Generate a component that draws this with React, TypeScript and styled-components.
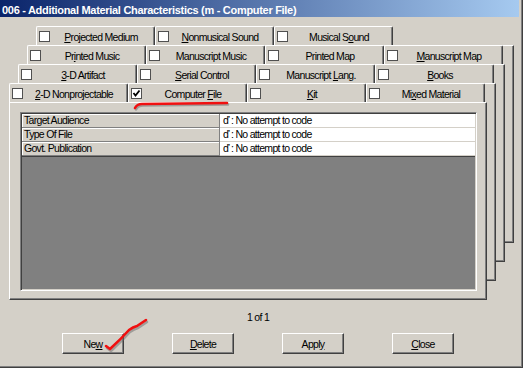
import React from "react";
import styled, { createGlobalStyle } from "styled-components";

type TabDef = { label: string; at?: number; checked?: boolean; active?: boolean };

const ROWS: TabDef[][] = [
  [
    { label: "Projected Medium", at: 0 },
    { label: "Nonmusical Sound", at: 0 },
    { label: "Musical Sound", at: 9 },
  ],
  [
    { label: "Printed Music", at: 2 },
    { label: "Manuscript Music" },
    { label: "Printed Map" },
    { label: "Manuscript Map", at: 0 },
  ],
  [
    { label: "3-D Artifact", at: 0 },
    { label: "Serial Control", at: 0 },
    { label: "Manuscript Lang.", at: 11 },
    { label: "Books", at: 0 },
  ],
  [
    { label: "2-D Nonprojectable", at: 0 },
    { label: "Computer File", at: 9, checked: true, active: true },
    { label: "Kit", at: 0 },
    { label: "Mixed Material", at: 2 },
  ],
];

const FIELDS = ["Target Audience", "Type Of File", "Govt. Publication"];

const BUTTONS: { label: string; at: number }[] = [
  { label: "New", at: 2 },
  { label: "Delete", at: 0 },
  { label: "Apply", at: 4 },
  { label: "Close", at: 0 },
];

const Accel = ({ text, at }: { text: string; at?: number }) =>
  at === undefined ? (
    <>{text}</>
  ) : (
    <>
      {text.slice(0, at)}
      <Key>{text[at]}</Key>
      {text.slice(at + 1)}
    </>
  );

const CheckBox = ({ checked }: { checked?: boolean }) => (
  <Box>
    {checked && (
      <svg width="9" height="9" viewBox="0 0 9 9">
        <path d="M1.5 4 L3.5 6.5 L7.5 1.5" fill="none" stroke="#000" strokeWidth="1.8" />
      </svg>
    )}
  </Box>
);

const App = (): JSX.Element => {
  return (
    <Window>
      <GlobalStyle />
      <TitleBar>006 - Additional Material Characteristics (m - Computer File)</TitleBar>
      <Notebook>
        {ROWS.map((row, depth) => (
          <Layer key={depth} $depth={depth}>
            <TabRow>
              {row.map((tab) => (
                <Tab key={tab.label}>
                  <CheckBox checked={tab.checked} />
                  <TabLabel>
                    <Accel text={tab.label} at={tab.at} />
                  </TabLabel>
                </Tab>
              ))}
            </TabRow>
            <Page>
              {depth === ROWS.length - 1 && (
                <GridArea>
                  <Rows>
                    {FIELDS.map((f) => (
                      <Row key={f}>
                        <LabelCell>{f}</LabelCell>
                        <ValueCell>ď : No attempt to code</ValueCell>
                      </Row>
                    ))}
                  </Rows>
                </GridArea>
              )}
            </Page>
          </Layer>
        ))}
      </Notebook>
      <Footer>
        <Status>1 of 1</Status>
        <ButtonRow>
          {BUTTONS.map((b) => (
            <Button key={b.label}>
              <Accel text={b.label} at={b.at} />
            </Button>
          ))}
        </ButtonRow>
      </Footer>
      <Marks width="523" height="368" viewBox="0 0 523 368">
        <g fill="none" strokeLinecap="round" strokeLinejoin="round">
          <path d="M136 109.5 Q138 105.5 143 105.5 L228 104.5" stroke="#6a6a6a" strokeOpacity="0.5" strokeWidth="2.5" />
          <path d="M135 108 Q137 104 142 104 L227 103" stroke="#f01010" strokeWidth="2.6" />
          <path d="M107 348 L111 351 Q122 341 130 332 Q134 329 138 328 L147 322" stroke="#6a6a6a" strokeOpacity="0.5" strokeWidth="2.5" />
          <path d="M106 346 L110 349 Q121 339 129 330 Q133 327 137 326 L146 320" stroke="#f01010" strokeWidth="2.6" />
        </g>
      </Marks>
    </Window>
  );
};

const GlobalStyle = createGlobalStyle`
  html, body {
    margin: 0;
    padding: 0;
    background: #d4d0c8;
  }
  body {
    font-family: "Liberation Sans", Arial, sans-serif;
    font-size: 10.5px;
    letter-spacing: -0.7px;
    color: #000;
  }
`;

const Window = styled.div`
  position: relative;
  width: 523px;
  height: 368px;
  box-sizing: border-box;
  display: flex;
  flex-direction: column;
  background: #d4d0c8;
  border-right: 1px solid #404040;
  border-bottom: 1px solid #404040;
  box-shadow: inset -1px -1px #808080;
  overflow: hidden;
`;

const TitleBar = styled.div`
  height: 14px;
  padding: 3px 0 0 2px;
  margin-right: 3px;
  line-height: 14px;
  font-size: 11px;
  font-weight: 700;
  letter-spacing: -0.3px;
  color: #fff;
  white-space: nowrap;
  background: linear-gradient(to right, #0a246a, #a6caf0);
`;

const Notebook = styled.div`
  display: grid;
  margin-top: 9px;
`;

const Layer = styled.div<{ $depth: number }>`
  grid-area: 1 / 1;
  justify-self: start;
  align-self: start;
  display: flex;
  flex-direction: column;
  width: 478px;
  height: 217px;
  margin-left: ${(p) => 36 - 9 * p.$depth}px;
  margin-top: ${(p) => 19 * p.$depth}px;
`;

const TabRow = styled.div`
  display: flex;
  height: 19px;
`;

const Tab = styled.div`
  width: 119px;
  height: 19px;
  box-sizing: border-box;
  display: flex;
  align-items: center;
  padding: 1px 2px 0 2px;
  background: #d4d0c8;
  border-top: 1px solid #fff;
  border-left: 1px solid #fff;
  border-right: 1px solid #404040;
  border-radius: 2px 2px 0 0;
  box-shadow: inset -1px 0 #808080;
`;

const Box = styled.span`
  width: 11px;
  height: 11px;
  box-sizing: border-box;
  flex: none;
  display: flex;
  align-items: center;
  justify-content: center;
  background: #fff;
  border: 1px solid #505050;
`;

const TabLabel = styled.span`
  flex: 1;
  text-align: center;
  white-space: nowrap;
`;

const Key = styled.u`
  text-decoration: underline;
  text-underline-offset: 1px;
`;

const Page = styled.div`
  flex: 1;
  box-sizing: border-box;
  display: flex;
  padding: 9px 9px 8px 10px;
  background: #d4d0c8;
  border-top: 1px solid #fff;
  border-left: 1px solid #fff;
  border-right: 1px solid #404040;
  border-bottom: 1px solid #404040;
  box-shadow: inset -1px -1px #808080;
`;

const GridArea = styled.div`
  flex: 1;
  background: #808080;
  border-top: 1px solid #808080;
  border-left: 1px solid #808080;
  border-right: 1px solid #fff;
  border-bottom: 1px solid #fff;
  box-shadow: inset 1px 1px #404040, inset -1px -1px #d4d0c8;
  padding: 1px;
`;

const Rows = styled.div`
  display: flex;
  flex-direction: column;
  border-bottom: 1px solid #404040;
`;

const Row = styled.div`
  display: grid;
  grid-template-columns: 198px 1fr;
  height: 14px;
  line-height: 13px;
`;

const LabelCell = styled.div`
  padding-left: 2px;
  background: #d4d0c8;
  border-bottom: 1px solid #808080;
  border-right: 1px solid #808080;
  box-shadow: inset 1px 1px #fff;
  white-space: nowrap;
  overflow: hidden;
`;

const ValueCell = styled.div`
  padding-left: 3px;
  background: #fff;
  border-bottom: 1px solid #d4d0c8;
  white-space: nowrap;
`;

const Footer = styled.div`
  display: flex;
  flex-direction: column;
  align-items: center;
  padding-right: 6px;
`;

const Status = styled.div`
  margin-top: 11px;
  line-height: 13px;
`;

const ButtonRow = styled.div`
  display: flex;
  gap: 48px;
  margin-top: 9px;
`;

const Button = styled.div`
  width: 62px;
  height: 21px;
  box-sizing: border-box;
  display: flex;
  align-items: center;
  justify-content: center;
  background: #d4d0c8;
  border-top: 1px solid #fff;
  border-left: 1px solid #fff;
  border-right: 1px solid #404040;
  border-bottom: 1px solid #404040;
  box-shadow: inset -1px -1px #808080;
`;

const Marks = styled.svg`
  position: absolute;
  top: 0;
  left: 0;
  pointer-events: none;
`;

export default App;
